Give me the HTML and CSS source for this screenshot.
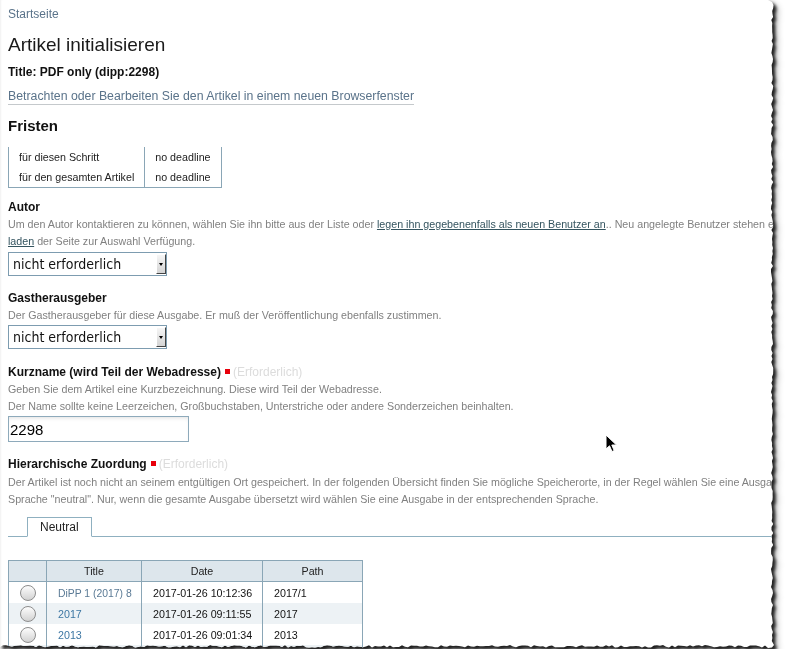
FILE: index.html
```html
<!DOCTYPE html>
<html lang="de">
<head>
<meta charset="utf-8">
<title>Artikel initialisieren</title>
<link rel="stylesheet" href="styles.css">
</head>
<body>
<div class="frame">
  <div class="page">
    <div class="content">
      <a class="crumb" href="#">Startseite</a>
      <h1>Artikel initialisieren</h1>
      <div class="title">Title: PDF only (dipp:2298)</div>
      <div class="view"><a href="#">Betrachten oder Bearbeiten Sie den Artikel in einem neuen Browserfenster</a></div>
      <h2>Fristen</h2>
      <table class="deadlines">
        <tr><td class="d1">für diesen Schritt</td><td class="d2">no deadline</td></tr>
        <tr><td class="d1">für den gesamten Artikel</td><td class="d2">no deadline</td></tr>
      </table>

      <div class="field first">
        <div class="label">Autor</div>
        <p class="desc">Um den Autor kontaktieren zu können, wählen Sie ihn bitte aus der Liste oder <a href="#">legen ihn gegebenenfalls als neuen Benutzer an</a>.. Neu angelegte Benutzer stehen erst nach dem erneuten<br><a href="#">laden</a> der Seite zur Auswahl Verfügung.</p>
        <div class="select"><span class="select-text">nicht erforderlich</span><span class="select-arrow"></span></div>
      </div>

      <div class="field">
        <div class="label">Gastherausgeber</div>
        <p class="desc">Der Gastherausgeber für diese Ausgabe. Er muß der Veröffentlichung ebenfalls zustimmen.</p>
        <div class="select tight"><span class="select-text">nicht erforderlich</span><span class="select-arrow"></span></div>
      </div>

      <div class="field kurz">
        <div class="label">Kurzname (wird Teil der Webadresse)<span class="req"></span><span class="req-text">(Erforderlich)</span></div>
        <p class="desc">Geben Sie dem Artikel eine Kurzbezeichnung. Diese wird Teil der Webadresse.<br>Der Name sollte keine Leerzeichen, Großbuchstaben, Unterstriche oder andere Sonderzeichen beinhalten.</p>
        <input class="text-input" type="text" value="2298">
      </div>

      <div class="field hier">
        <div class="label">Hierarchische Zuordung<span class="req"></span><span class="req-text">(Erforderlich)</span></div>
        <p class="desc">Der Artikel ist noch nicht an seinem entgültigen Ort gespeichert. In der folgenden Übersicht finden Sie mögliche Speicherorte, in der Regel wählen Sie eine Ausgabe der<br>Sprache "neutral". Nur, wenn die gesamte Ausgabe übersetzt wird wählen Sie eine Ausgabe in der entsprechenden Sprache.</p>
      </div>

      <div class="tabs"><span class="tab">Neutral</span></div>

      <table class="locations">
        <colgroup><col class="c-radio"><col class="c-title"><col class="c-date"><col class="c-path"></colgroup>
        <thead>
          <tr><th></th><th>Title</th><th>Date</th><th>Path</th></tr>
        </thead>
        <tbody>
          <tr><td class="rc"><span class="radio"></span></td><td><a class="visited" href="#">DiPP 1 (2017) 8</a></td><td>2017-01-26 10:12:36</td><td>2017/1</td></tr>
          <tr class="alt"><td class="rc"><span class="radio"></span></td><td><a href="#">2017</a></td><td>2017-01-26 09:11:55</td><td>2017</td></tr>
          <tr><td class="rc"><span class="radio"></span></td><td><a href="#">2013</a></td><td>2017-01-26 09:01:34</td><td>2013</td></tr>
          <tr class="alt"><td class="rc"><span class="radio"></span></td><td><a href="#">2012</a></td><td>2017-01-26 08:58:12</td><td>2012</td></tr>
        </tbody>
      </table>
    </div>
    <svg class="cursor" width="14" height="20" viewBox="0 0 14 20" aria-hidden="true">
      <path d="M1 1 L1 15 L4.5 11.8 L7 17.5 L9.2 16.6 L6.8 11 L11.5 11 Z" fill="#000" stroke="#fff" stroke-width="1" stroke-linejoin="round"/>
    </svg>
  </div>
</div>
<script src="script.js"></script>
</body>
</html>
```

FILE: styles.css
```css
html, body {
  margin: 0;
  padding: 0;
  background: #fff;
}

body {
  font-family: "Liberation Sans", Arial, sans-serif;
  color: #222;
}

.frame {
  width: 775px;
  height: 649px;
  filter: drop-shadow(3px 3px 1.5px rgba(0, 0, 0, 0.8)) drop-shadow(1px 2px 3px rgba(0, 0, 0, 0.45));
}

.page {
  position: relative;
  width: 775px;
  height: 649px;
  background: #fff;
  overflow: hidden;
  box-shadow: inset 2px 0 2px -1px rgba(0, 0, 0, 0.06);
}

.content {
  width: 1400px;
  padding: 6px 0 0 8px;
}

.crumb {
  display: block;
  font-size: 12px;
  line-height: 16px;
  color: #5a738a;
  text-decoration: none;
}

h1 {
  margin: 11px 0 0;
  font-size: 19px;
  line-height: 24px;
  font-weight: normal;
  color: #1a1a1a;
}

.title {
  margin-top: 7px;
  font-size: 12px;
  line-height: 16px;
  font-weight: bold;
  color: #111;
}

.view {
  margin-top: 8px;
  font-size: 12.3px;
  line-height: 16px;
}

.view a {
  display: inline-block;
  color: #5a738a;
  text-decoration: none;
  border-bottom: 1px solid #c5c9cc;
}

h2 {
  margin: 11px 0 0;
  font-size: 15px;
  line-height: 20px;
  font-weight: bold;
  color: #111;
}

.deadlines {
  margin-top: 11px;
  border-collapse: collapse;
  font-size: 10.7px;
  color: #222;
}

.deadlines td {
  height: 20px;
  padding: 0 10px;
  line-height: 20px;
  border-left: 1px solid #8aa6b6;
  border-right: 1px solid #8aa6b6;
  white-space: nowrap;
}

.deadlines tr:last-child td {
  border-bottom: 1px solid #8aa6b6;
}

.deadlines .d1 { width: 115px; }
.deadlines .d2 { width: 55px; }

.field {
  margin-top: 14px;
}

.field.first {
  margin-top: 11px;
}

.field.kurz {
  margin-top: 15px;
}

.field.hier .desc {
  margin-top: 2px;
}

.label {
  font-size: 12px;
  line-height: 16px;
  font-weight: bold;
  color: #111;
}

.desc {
  margin: 1px 0 0;
  font-size: 10.7px;
  line-height: 17px;
  color: #808080;
  white-space: nowrap;
}

.desc a {
  color: #34545f;
  text-decoration: underline;
}

.req {
  display: inline-block;
  width: 5px;
  height: 5px;
  margin: 0 3px 0 4px;
  background: #e8000b;
  vertical-align: 2px;
}

.req-text {
  font-weight: normal;
  color: #dcdcdc;
}

.select {
  margin-top: 2px;
  width: 157px;
  height: 22px;
  border: 1px solid #7d9cb0;
  display: flex;
  align-items: center;
  justify-content: space-between;
  background: #fff;
}

.select.tight {
  margin-top: 1px;
}

.select-text {
  padding-left: 4px;
  font-family: "DejaVu Sans Condensed", "DejaVu Sans", sans-serif;
  font-size: 14px;
  line-height: 20px;
  color: #111;
}

.select-arrow {
  width: 8px;
  height: 18px;
  border-top: 1px solid #fff;
  border-left: 1px solid #fff;
  border-right: 1px solid #444;
  border-bottom: 1px solid #444;
  background: linear-gradient(#f6f6f6, #d4d4d4);
  display: flex;
  align-items: center;
  justify-content: center;
}

.select-arrow::after {
  content: "";
  border-left: 2px solid transparent;
  border-right: 2px solid transparent;
  border-top: 3px solid #000;
}

.text-input {
  display: block;
  box-sizing: border-box;
  margin: 1px 0 0;
  width: 181px;
  height: 26px;
  padding: 0 0 0 1px;
  border: 1px solid #8eaabb;
  box-shadow: inset 0 3px 4px -2px rgba(0, 0, 0, 0.12);
  font-family: "Liberation Sans", Arial, sans-serif;
  font-size: 15px;
  color: #000;
  outline: none;
}

.tabs {
  margin-top: 9px;
  height: 19px;
  padding-left: 19px;
  border-bottom: 1px solid #8fb0c0;
}

.tab {
  display: inline-block;
  height: 18px;
  line-height: 18px;
  padding: 0 12px;
  border: 1px solid #8fb0c0;
  border-bottom-color: #fff;
  background: #fff;
  font-size: 12px;
  color: #222;
}

.locations {
  margin-top: 23px;
  width: 354px;
  table-layout: fixed;
  border-collapse: collapse;
  font-size: 10.7px;
  color: #111;
}

.c-radio { width: 38px; }
.c-title { width: 95px; }
.c-date { width: 121px; }
.c-path { width: 100px; }

.locations th {
  height: 20px;
  padding: 0;
  border: 1px solid #8aa6b6;
  background: #dde6ec;
  font-weight: normal;
  text-align: center;
  color: #222;
}

.locations td {
  height: 21px;
  padding: 0 0 0 11px;
  border-left: 1px solid #8aa6b6;
  border-right: 1px solid #8aa6b6;
  white-space: nowrap;
}

.locations td.rc {
  padding: 0;
}

.locations tr.alt td {
  background: #edf2f5;
}

.locations a {
  color: #3d77a3;
  text-decoration: none;
}

.locations a.visited {
  color: #5a7a95;
  font-size: 10.4px;
}

.radio {
  display: block;
  width: 14px;
  height: 14px;
  margin: 0 auto;
  border: 1px solid #8d8d8d;
  border-radius: 50%;
  background: linear-gradient(#fdfdfd, #d2d2d2);
}

.cursor {
  position: absolute;
  left: 605px;
  top: 434px;
}
```

FILE: script.js
```js
(function () {
  var page = document.querySelector('.page');
  if (!page) return;
  var W = 775, H = 649;
  var seed = 11;
  function rnd() {
    seed = (seed * 16807) % 2147483647;
    return seed / 2147483647;
  }
  var pts = ['0px 0px', (W - 7) + 'px 0px', (W - 3) + 'px 2px', (W - 1.5) + 'px 5px'];
  for (var y = 8; y < H - 7; y += 3) {
    pts.push((W - 1.8 - rnd() * 2.2).toFixed(1) + 'px ' + y + 'px');
  }
  pts.push((W - 1) + 'px ' + (H - 4) + 'px');
  pts.push((W - 3) + 'px ' + (H - 1.5) + 'px');
  pts.push((W - 7) + 'px ' + (H - 1) + 'px');
  for (var x = W - 10; x > 0; x -= 3) {
    pts.push(x + 'px ' + (H - 1.5 - rnd() * 2.4).toFixed(1) + 'px');
  }
  pts.push('0px ' + (H - 2) + 'px');
  page.style.clipPath = 'polygon(' + pts.join(', ') + ')';
})();
```
